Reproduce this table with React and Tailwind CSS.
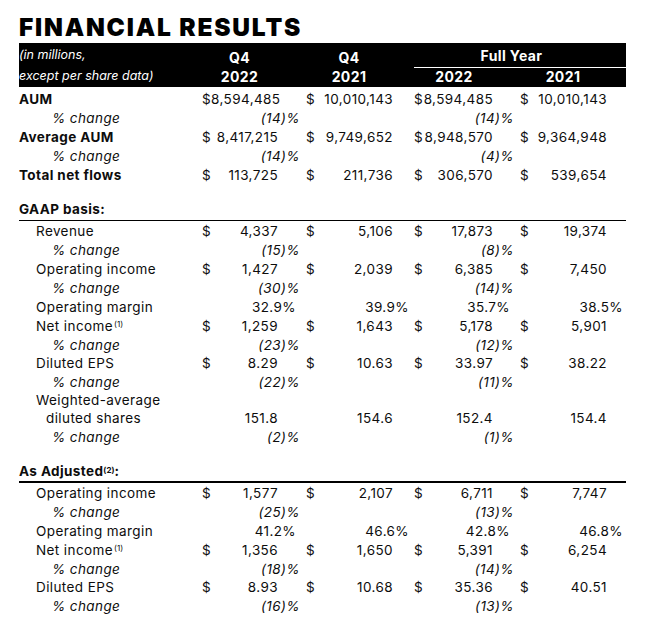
const COLS = 'grid grid-cols-[179px_105px_110px_105px_108px]';

const DOL_PL = ['pl-[4px]', 'pl-[3px]', 'pl-[1px]', 'pl-[2px]'];
const NUM_PR = ['pr-[25px]', 'pr-[20px]', 'pr-[25px]', 'pr-[19px]'];
const PCT_PR = ['pr-[3px]', 'pr-[3px]', 'pr-[4px]', 'pr-[3px]'];
const MAR_PR = ['pr-[7px]', 'pr-[4px]', 'pr-[8px]', 'pr-[3px]'];

const top = [
  { label: 'AUM', kind: 'bold', vals: ['$8,594,485', '$10,010,143', '$8,594,485', '$10,010,143'] },
  { label: '% change', kind: 'pct', vals: ['(14)%', '', '(14)%', ''] },
  { label: 'Average AUM', kind: 'bold', vals: ['$8,417,215', '$9,749,652', '$8,948,570', '$9,364,948'] },
  { label: '% change', kind: 'pct', vals: ['(14)%', '', '(4)%', ''] },
  { label: 'Total net flows', kind: 'bold', vals: ['$113,725', '$211,736', '$306,570', '$539,654'] },
];

const gaap = [
  { label: 'Revenue', vals: ['$4,337', '$5,106', '$17,873', '$19,374'] },
  { label: '% change', kind: 'pct', vals: ['(15)%', '', '(8)%', ''] },
  { label: 'Operating income', vals: ['$1,427', '$2,039', '$6,385', '$7,450'] },
  { label: '% change', kind: 'pct', vals: ['(30)%', '', '(14)%', ''] },
  { label: 'Operating margin', vals: ['32.9%', '39.9%', '35.7%', '38.5%'] },
  { label: 'Net income', note: '(1)', vals: ['$1,259', '$1,643', '$5,178', '$5,901'] },
  { label: '% change', kind: 'pct', vals: ['(23)%', '', '(12)%', ''] },
  { label: 'Diluted EPS', vals: ['$8.29', '$10.63', '$33.97', '$38.22'] },
  { label: '% change', kind: 'pct', vals: ['(22)%', '', '(11)%', ''] },
];

const gaapTail = [{ label: '% change', kind: 'pct', vals: ['(2)%', '', '(1)%', ''] }];

const adjusted = [
  { label: 'Operating income', vals: ['$1,577', '$2,107', '$6,711', '$7,747'] },
  { label: '% change', kind: 'pct', vals: ['(25)%', '', '(13)%', ''] },
  { label: 'Operating margin', vals: ['41.2%', '46.6%', '42.8%', '46.8%'] },
  { label: 'Net income', note: '(1)', vals: ['$1,356', '$1,650', '$5,391', '$6,254'] },
  { label: '% change', kind: 'pct', vals: ['(18)%', '', '(14)%', ''] },
  { label: 'Diluted EPS', vals: ['$8.93', '$10.68', '$35.36', '$40.51'] },
  { label: '% change', kind: 'pct', vals: ['(16)%', '', '(13)%', ''] },
];

function Value({ i, v }) {
  if (!v) return <div />;
  if (v.startsWith('$')) {
    return (
      <div className="flex items-center">
        <span className={DOL_PL[i]}>$</span>
        <span className={`flex-1 text-right ${NUM_PR[i]}`}>{v.slice(1)}</span>
      </div>
    );
  }
  if (v.endsWith(')%')) {
    return <div className={`text-right italic ${PCT_PR[i]}`}>{v}</div>;
  }
  if (v.endsWith('%')) {
    return <div className={`text-right ${MAR_PR[i]}`}>{v}</div>;
  }
  return <div className={`text-right ${NUM_PR[i]}`}>{v}</div>;
}

function Row({ row }) {
  let labelClass = 'pl-[17px]';
  if (row.kind === 'bold') labelClass = 'font-bold';
  if (row.kind === 'pct') labelClass = 'pl-[33px] italic';
  return (
    <div className={`${COLS} h-[18.9px] items-center`}>
      <div className={`whitespace-nowrap ${labelClass}`}>
        {row.label}
        {row.note ? <span className="relative -top-[4px] ml-[1px] text-[8px] tracking-normal">{row.note}</span> : null}
      </div>
      {row.vals.map((v, i) => (
        <Value key={i} i={i} v={v} />
      ))}
    </div>
  );
}

export default function App() {
  return (
    <div className="min-h-[617px] w-[645px] bg-white font-[family-name:Inter,sans-serif] text-[13.5px] tracking-[0.4px] text-[#0d0d0d]">
      <div className="ml-[19px] w-[607px]">
        <h1 className="h-[43px] pt-[15px] text-[24.5px] font-black leading-[24px] tracking-[1.8px] text-black">
          FINANCIAL RESULTS
        </h1>

        <div className="bg-black text-white">
          <div className={`${COLS} h-[22px] items-center`}>
            <div className="text-[12.5px] italic tracking-normal">(in millions,</div>
            <div className="pr-[22px] pt-[4px] text-center text-[14px] font-bold">Q4</div>
            <div className="pr-[18px] pt-[4px] text-center text-[14px] font-bold">Q4</div>
            <div className="col-span-2 ml-[1px] flex h-full items-end justify-center border-b-[1.5px] border-white pb-[1px] pr-[17px] text-[14px] font-bold">
              Full Year
            </div>
          </div>
          <div className={`${COLS} h-[22px] items-center`}>
            <div className="text-[12.5px] italic tracking-normal">except per share data)</div>
            <div className="pr-[22px] text-center text-[14px] font-bold">2022</div>
            <div className="pr-[18px] text-center text-[14px] font-bold">2021</div>
            <div className="pr-[23px] text-center text-[14px] font-bold">2022</div>
            <div className="pr-[18px] text-center text-[14px] font-bold">2021</div>
          </div>
        </div>

        <div className="pt-[2px]">
          {top.map((r, i) => (
            <Row key={i} row={r} />
          ))}
          <div className="h-[18.9px]" />

          <div className="flex h-[18.9px] items-end border-b-[1.5px] border-black pb-[1px] font-bold">GAAP basis:</div>
          {gaap.map((r, i) => (
            <Row key={i} row={r} />
          ))}
          <div className={`${COLS} items-end`}>
            <div>
              <div className="flex h-[18.5px] items-center pl-[17px]">Weighted-average</div>
              <div className="flex h-[17.5px] items-center pl-[27px]">diluted shares</div>
            </div>
            {['151.8', '154.6', '152.4', '154.4'].map((v, i) => (
              <div key={i} className="flex h-[17.5px] items-center">
                <div className="w-full">
                  <Value i={i} v={v} />
                </div>
              </div>
            ))}
          </div>
          {gaapTail.map((r, i) => (
            <Row key={i} row={r} />
          ))}
          <div className="h-[18.9px]" />

          <div className="flex h-[18px] items-end border-b-2 border-black font-bold">
            As Adjusted
            <span className="relative -top-[5px] text-[8px] tracking-normal">(2)</span>:
          </div>
          {adjusted.map((r, i) => (
            <Row key={i} row={r} />
          ))}
        </div>
      </div>
    </div>
  );
}
